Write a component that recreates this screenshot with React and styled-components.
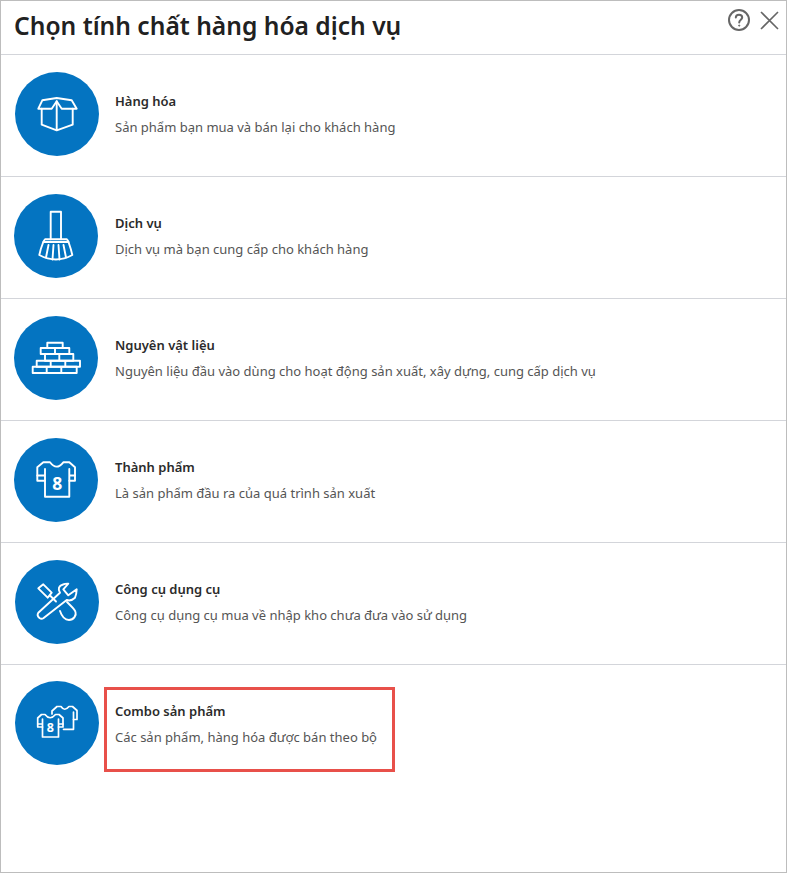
import React from 'react';
import styled, { createGlobalStyle } from 'styled-components';

const GlobalStyle = createGlobalStyle`
  html, body {
    margin: 0;
    padding: 0;
    background: #fff;
  }
  body {
    font-family: "Noto Sans", sans-serif;
  }
`;

const Dialog = styled.div`
  box-sizing: border-box;
  width: 787px;
  height: 873px;
  border: 1px solid #bdbdbd;
  background: #fff;
  overflow: hidden;
`;

const Header = styled.header`
  box-sizing: border-box;
  height: 54px;
  display: flex;
  justify-content: space-between;
  align-items: flex-start;
  padding: 0 7px 0 13px;
  border-bottom: 1px solid #d3d5da;
`;

const Title = styled.h1`
  margin: 8px 0 0;
  font-size: 24.6px;
  line-height: 34px;
  font-weight: 600;
  color: #212121;
`;

const Actions = styled.div`
  display: flex;
  align-items: center;
  gap: 9px;
  padding-top: 7px;
  color: #666;
`;

const Row = styled.div`
  position: relative;
  box-sizing: border-box;
  height: 122px;
  display: flex;
  align-items: flex-start;
  padding: ${(p) => p.$top}px 0 0 ${(p) => p.$left}px;
  border-bottom: ${(p) => (p.$last ? 'none' : '1px solid #d3d5da')};
`;

const Circle = styled.div`
  flex: none;
  width: 84px;
  height: 84px;
  border-radius: 50%;
  background: #0474c1;
  color: #fff;
`;

const TextBlock = styled.div`
  position: absolute;
  left: 114px;
  top: 36px;
`;

const Name = styled.div`
  font-size: 13px;
  line-height: 20px;
  font-weight: 600;
  color: #2b2b2b;
`;

const Desc = styled.div`
  margin-top: 6px;
  font-size: 13px;
  line-height: 20px;
  color: #555;
`;

const Highlight = styled.div`
  position: absolute;
  left: 103px;
  top: 22px;
  box-sizing: border-box;
  width: 291px;
  height: 85px;
  border: 3px solid #e8504a;
`;

const Svg = ({ children, weight = 1.9 }) => (
  <svg
    width="84"
    height="84"
    viewBox="0 0 84 84"
    fill="none"
    stroke="currentColor"
    strokeWidth={weight}
    strokeLinejoin="round"
    strokeLinecap="round"
  >
    {children}
  </svg>
);

const Digit = styled.text`
  font-family: "Noto Sans", sans-serif;
  font-weight: 700;
  fill: currentColor;
  stroke: none;
  text-anchor: middle;
`;

const BoxIcon = () => (
  <Svg>
    <path d="M23.3 36.7L27.3 28.3L41.7 26L56.7 28.3L61.7 36.7H46.7L41.7 29.3L36.7 36.7Z" />
    <path d="M26.7 36.7V52.7L41.7 58.3L57.7 52.7V36.7M41.7 29.3V58.3" />
  </Svg>
);

const BroomIcon = () => (
  <Svg>
    <path d="M36.7 45.3V17.7H47V45.3" />
    <path d="M31 45.3H52.7Q54 46.5 54.5 48Q57 55 58.3 61Q42 70 25.3 61Q26.5 55 29.3 48Q29.8 46.5 31 45.3Z" />
    <path d="M29.3 48H54.5M34.5 51L32 63.5M39.5 51L38.5 65.5M44.5 51L45.5 65.5M49.5 51L52 63.5" />
  </Svg>
);

const BricksIcon = () => (
  <Svg>
    <path d="M33.3 26.7H48.7V32H33.3Z" />
    <path d="M26.7 32H55.3V38H26.7ZM41 32V38" />
    <path d="M31 38H59.3V44.7H31ZM45.3 38V44.7" />
    <path d="M22.7 44.7H66V50.7H22.7ZM36.7 44.7V50.7M51.3 44.7V50.7" />
    <path d="M18.7 50.7H62.7V57H18.7ZM32.7 50.7V57M47.3 50.7V57" />
  </Svg>
);

const ShirtIcon = () => (
  <Svg>
    <path d="M36 24.3Q42.5 33 49.3 24.3H55.3L61 29.3V42.7H55.3V58.7H31V42.7H23.3V29.3L29.3 24.3Z" />
    <path d="M23.3 37.5H31M55.3 37.5H61M31 31V42.7M55.3 31V42.7" />
    <Digit x="43.2" y="51.5" fontSize="17.5">8</Digit>
  </Svg>
);

const ToolsIcon = () => (
  <Svg>
    <path d="M23.3 28.3L28.3 24.3L36.7 32.7L32.7 37.7Z" />
    <path d="M35 35.5L41 41.5" />
    <path d="M23.3 52.7L45 32.7Q41.5 26.5 48 24.5Q50.5 23.5 53.3 23.7L48.3 29.3L53.3 35.3L61.7 29.3Q61.5 34.5 60 37.7Q56 41.5 51.7 40L28.3 58.3Q26.5 59.5 24.5 58Q21.5 55.5 23.3 52.7Z" />
    <path d="M45 51C47 57 50 60 54 60C59 60 61.5 55 60.5 52C60 50 58 48 56 46L52 42" />
  </Svg>
);

const ComboIcon = () => (
  <Svg weight={1.7}>
    <path d="M30 33.5Q35 40 40.5 33.5H44L48 37V46H43.5V56H27.5V46H22.7V37L26.5 33.5Z" />
    <path d="M22.7 43H27.5M43.5 43H48M27.5 38V46M43.5 38V46" />
    <Digit x="35.3" y="50.7" fontSize="12.5">8</Digit>
    <path d="M37 33V30L42 25.5H46Q49.5 31 54 25.5H57.5L62 29.5V38.5H58.5V48.3H48.5" />
    <path d="M58.5 31V38.5" />
  </Svg>
);

const items = [
  { name: 'Hàng hóa', desc: 'Sản phẩm bạn mua và bán lại cho khách hàng', Icon: BoxIcon, left: 14, top: 17 },
  { name: 'Dịch vụ', desc: 'Dịch vụ mà bạn cung cấp cho khách hàng', Icon: BroomIcon, left: 13, top: 17 },
  { name: 'Nguyên vật liệu', desc: 'Nguyên liệu đầu vào dùng cho hoạt động sản xuất, xây dựng, cung cấp dịch vụ', Icon: BricksIcon, left: 13, top: 17 },
  { name: 'Thành phẩm', desc: 'Là sản phẩm đầu ra của quá trình sản xuất', Icon: ShirtIcon, left: 13, top: 17 },
  { name: 'Công cụ dụng cụ', desc: 'Công cụ dụng cụ mua về nhập kho chưa đưa vào sử dụng', Icon: ToolsIcon, left: 14, top: 17 },
  { name: 'Combo sản phẩm', desc: 'Các sản phẩm, hàng hóa được bán theo bộ', Icon: ComboIcon, left: 14, top: 16, marked: true },
];

export default function App() {
  return (
    <Dialog>
      <GlobalStyle />
      <Header>
        <Title>Chọn tính chất hàng hóa dịch vụ</Title>
        <Actions>
          <svg width="24" height="24" viewBox="0 0 24 24" fill="none" stroke="currentColor" strokeWidth="2">
            <circle cx="12" cy="12" r="10" />
            <path d="M8.8 9.6C8.8 7.8 10.2 6.8 12 6.8C13.8 6.8 15.2 7.8 15.2 9.5C15.2 11.6 12.2 11.8 12.2 14.4" strokeLinecap="round" />
            <circle cx="12.2" cy="17.6" r="0.6" fill="currentColor" strokeWidth="1" />
          </svg>
          <svg width="19" height="19" viewBox="0 0 19 19" fill="none" stroke="currentColor" strokeWidth="1.6">
            <path d="M1 1L18 18M18 1L1 18" />
          </svg>
        </Actions>
      </Header>
      {items.map(({ name, desc, Icon, left, top, marked }, i) => (
        <Row key={name} $left={left} $top={top} $last={i === items.length - 1}>
          <Circle>
            <Icon />
          </Circle>
          <TextBlock>
            <Name>{name}</Name>
            <Desc>{desc}</Desc>
          </TextBlock>
          {marked && <Highlight />}
        </Row>
      ))}
    </Dialog>
  );
}
